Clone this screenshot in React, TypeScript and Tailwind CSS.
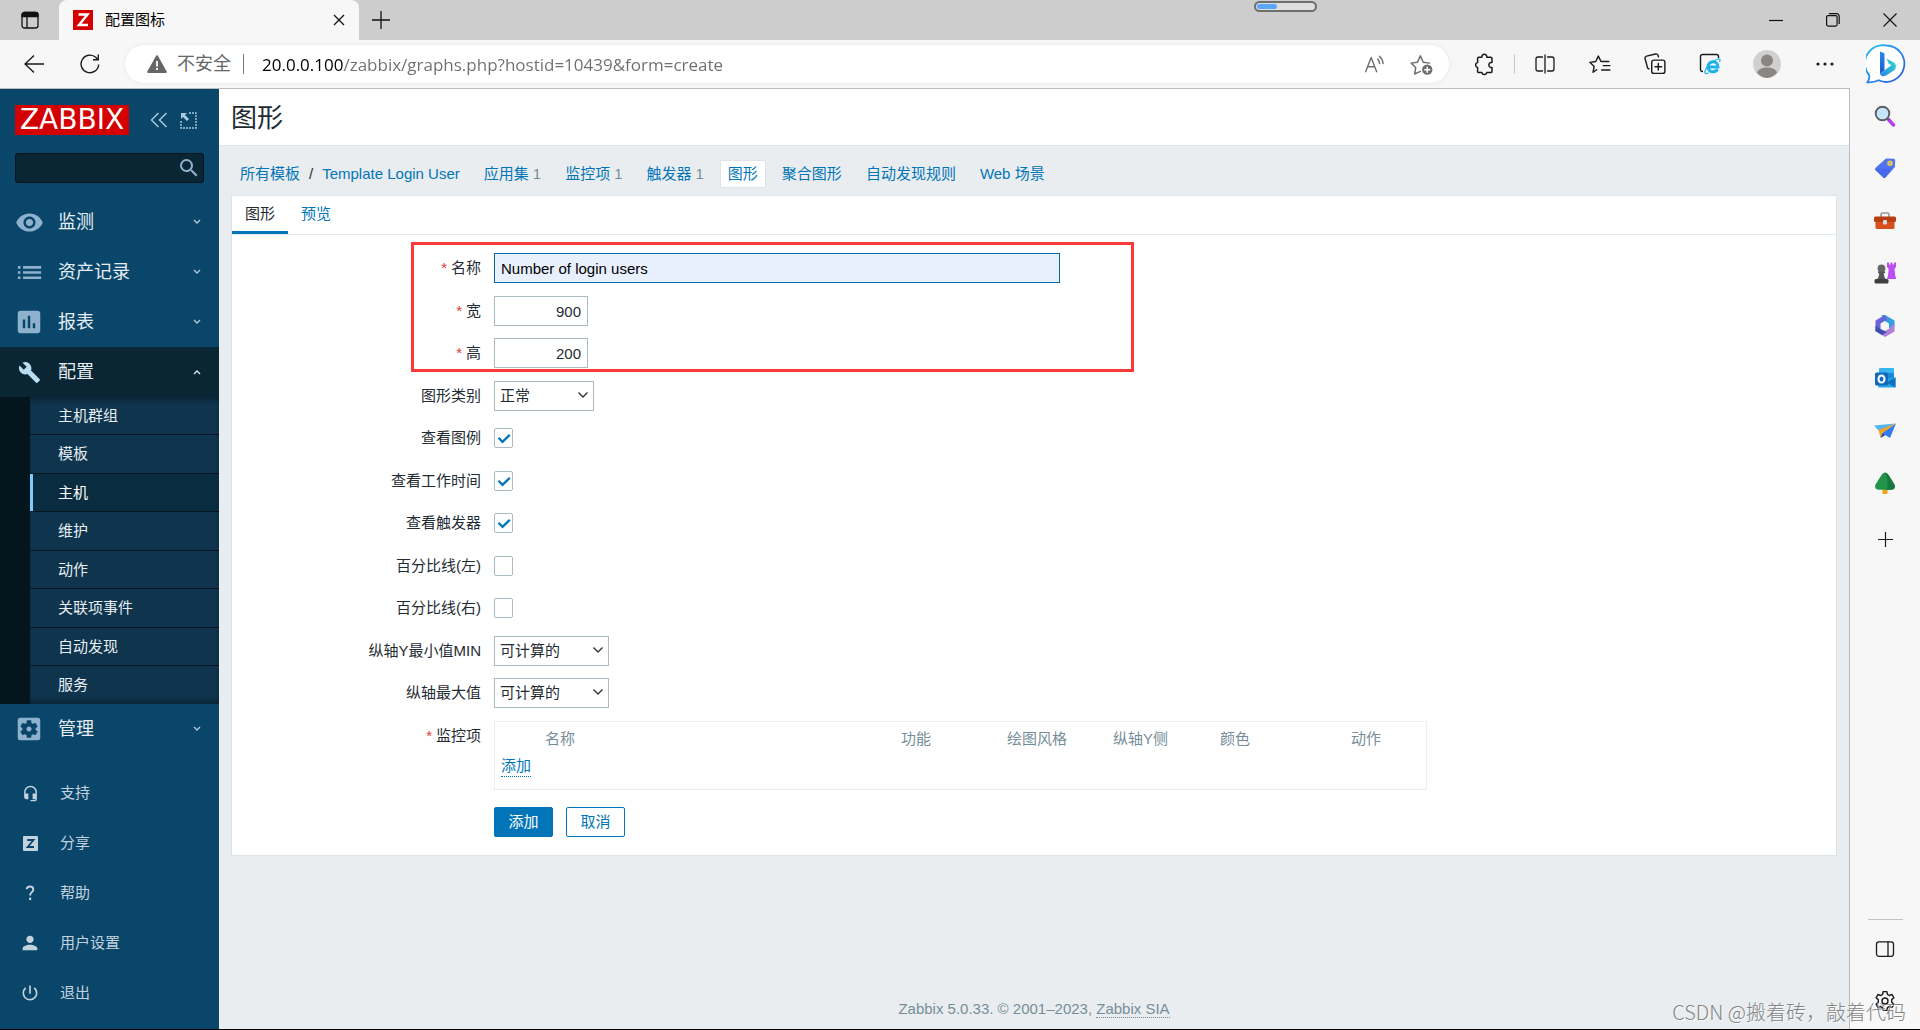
// src/App.tsx
import { useState } from "react";
import type { ReactNode } from "react";
import clsx from "clsx";
import {
  MdAssessment,
  MdBuild,
  MdHeadsetMic,
  MdList,
  MdPerson,
  MdPowerSettingsNew,
  MdSearch,
  MdSettingsApplications,
  MdVisibility,
} from "react-icons/md";

/* ---------- 图标 ---------- */

interface LineIconProps {
  children: ReactNode;
  className?: string;
}

const LineIcon = ({ children, className = "w-5 h-5" }: LineIconProps) => (
  <svg
    className={className}
    viewBox="0 0 20 20"
    fill="none"
    stroke="currentColor"
    strokeWidth={1.3}
    strokeLinecap="round"
    strokeLinejoin="round"
    aria-hidden="true"
  >
    {children}
  </svg>
);

const ChevronIcon = ({ up = false }: { up?: boolean }) => (
  <svg className="w-2 h-2" viewBox="0 0 8 8" fill="none" stroke="currentColor" strokeWidth={1.3}>
    <path d={up ? "M1 6l3-3 3 3" : "M1 2l3 3 3-3"} />
  </svg>
);

const ShareIcon = () => (
  <svg className="w-[15px] h-[15px]" viewBox="0 0 15 15">
    <rect width="15" height="15" rx="1" fill="currentColor" />
    <path d="M4.2 4h6.4L4.6 11h6.4" fill="none" stroke="#0a466a" strokeWidth="1.8" />
  </svg>
);

const HelpIcon = () => (
  <svg className="w-4 h-4" viewBox="0 0 16 16" fill="none" stroke="currentColor">
    <path d="M4.6 4.2C4.9 2.4 6.2 1.5 8 1.5c2 0 3.3 1.1 3.3 2.9 0 2.6-3.2 2.9-3.2 6" strokeWidth="1.9" />
    <path d="M8.1 12.6v2.4" strokeWidth="2.2" />
  </svg>
);

const BingIcon = () => (
  <svg className="w-10 h-10" viewBox="0 0 40 40">
    <defs>
      <linearGradient id="bingRing" x1="0" y1="0" x2="1" y2="1">
        <stop offset="0" stopColor="#1fc3f0" />
        <stop offset="0.5" stopColor="#2a8af0" />
        <stop offset="1" stopColor="#2456d6" />
      </linearGradient>
      <linearGradient id="bingStem" x1="0" y1="0" x2="0" y2="1">
        <stop offset="0" stopColor="#2a8bf2" />
        <stop offset="1" stopColor="#1f57d0" />
      </linearGradient>
      <linearGradient id="bingBowl" x1="0" y1="1" x2="1" y2="0">
        <stop offset="0" stopColor="#2383ee" />
        <stop offset="1" stopColor="#35e0c8" />
      </linearGradient>
    </defs>
    <path
      d="M20.500 1.500a18.200 18.200 0 1 1-7.800 34.800c-3 1.500-7 2.200-11.200 2 1.700-2.300 2.100-4.300 1.700-7.100A18.200 18.200 0 0 1 20.500 1.500z"
      fill="#fff"
      stroke="url(#bingRing)"
      strokeWidth="1.8"
    />
    <path d="M14 7.500l4.500 1.800v17L14 30z" fill="url(#bingStem)" />
    <path d="M20.500 14.500l2.300 5.300 2.700 1.400-7 5.100L14 30c1.200 2.400 3.800 2.900 6 1.600l7.500-4.800c3.700-2.600 3-7.300-.5-8.800z" fill="url(#bingBowl)" />
  </svg>
);

/* ---------- 浏览器外壳 ---------- */

const TitleBar = () => (
  <div className="flex h-10 items-end bg-[#cdcdcd] pr-0.5 text-black">
    <button aria-label="标签操作" className="flex h-10 w-[59px] items-center justify-center">
      <svg className="w-[18px] h-[18px]" viewBox="0 0 18 18" fill="none" stroke="#111" strokeWidth="1.3">
        <rect x="1" y="1.5" width="16" height="15.5" rx="2.5" />
        <path d="M1 4a2.500 2.500 0 0 1 2.500-2.500h11A2.500 2.500 0 0 1 17 4v1.500H1z" fill="#111" />
        <path d="M6 5.500V17" />
      </svg>
    </button>
    <div className="flex h-10 w-[300px] items-center rounded-t-lg bg-[#f7f7f7] pl-[14px] pr-2.5">
      <svg className="w-5 h-5" viewBox="0 0 20 20">
        <rect width="20" height="20" fill="#d40000" />
        <path d="M5.500 4.500h9L6 15h9" fill="none" stroke="#fff" strokeWidth="2.4" />
      </svg>
      <span className="ml-3 flex-1 text-[15px] leading-5">配置图标</span>
      <button aria-label="关闭标签页" className="p-1">
        <svg className="w-3 h-3" viewBox="0 0 12 12" stroke="#111" strokeWidth="1.3">
          <path d="M1 1l10 10M11 1L1 11" />
        </svg>
      </button>
    </div>
    <button aria-label="新建标签页" className="flex h-10 w-11 items-center justify-center">
      <svg className="w-[18px] h-[18px]" viewBox="0 0 18 18" stroke="#111" strokeWidth="1.3">
        <path d="M9 0v18M0 9h18" />
      </svg>
    </button>
    <div className="flex flex-1 self-start pl-[851px] pt-px">
      <div className="h-[11px] w-[63px] rounded-full border-2 border-[#6f6f6f] bg-[#dedede] p-px">
        <div className="h-full w-5 rounded-full bg-[#5ba5fb]" />
      </div>
    </div>
    <div className="flex h-10 items-center">
      <button aria-label="最小化" className="flex h-10 w-[57px] items-center justify-center">
        <svg className="w-[14px] h-[14px]" viewBox="0 0 14 14" stroke="#111" strokeWidth="1.2">
          <path d="M0 7.500h14" />
        </svg>
      </button>
      <button aria-label="还原" className="flex h-10 w-[57px] items-center justify-center">
        <svg className="w-[14px] h-[14px]" viewBox="0 0 14 14" fill="none" stroke="#111" strokeWidth="1.2">
          <rect x="0.6" y="2.6" width="10.5" height="10.5" rx="1.5" />
          <path d="M3 0.700h7.500a2.700 2.700 0 0 1 2.700 2.700V11" />
        </svg>
      </button>
      <button aria-label="关闭" className="flex h-10 w-[57px] items-center justify-center">
        <svg className="w-[14px] h-[14px]" viewBox="0 0 14 14" stroke="#111" strokeWidth="1.1">
          <path d="M0.500 0.500l13 13M13.500 0.500l-13 13" />
        </svg>
      </button>
    </div>
  </div>
);

const ToolButton = ({ label, children }: { label: string; children: ReactNode }) => (
  <button aria-label={label} className="flex h-9 w-[55px] items-center justify-center">
    {children}
  </button>
);

const AddressBar = () => (
  <div className="flex h-12 items-center bg-[#f7f7f7] text-[#1b1b1b]">
    <button aria-label="后退" className="flex h-9 w-[68px] items-center justify-center">
      <svg className="w-5 h-5" viewBox="0 0 20 20" fill="none" stroke="currentColor" strokeWidth="1.4">
        <path d="M20 10H1M10 1.500L1 10l9 8.500" />
      </svg>
    </button>
    <button aria-label="刷新" className="flex h-9 w-11 items-center justify-center">
      <svg className="w-5 h-5" viewBox="0 0 20 20" fill="none" stroke="currentColor" strokeWidth="1.4">
        <path d="M18.700 10.500A8.800 8.800 0 1 1 16 3.600L18 5.600" />
        <path d="M18.300 0.500v5.300H13" />
      </svg>
    </button>
    <div className="ml-[13px] flex h-[38px] flex-1 items-center rounded-full bg-white pl-[22px] pr-4 shadow-[0_0_4px_rgba(0,0,0,0.08)]">
      <svg className="w-5 h-[18px]" viewBox="0 0 20 18">
        <path d="M10 1.200L18.800 17H1.200z" fill="#666" stroke="#666" strokeWidth="2" strokeLinejoin="round" />
        <path d="M10 6v5.500M10 13v2" stroke="#fff" strokeWidth="1.8" />
      </svg>
      <span className="ml-2.5 text-lg leading-6 text-[#666]">不安全</span>
      <span className="mx-3 h-5 w-px bg-[#777]" />
      {/* 主机名为黑色，路径为灰色 */}
      <input
        aria-label="地址"
        type="text"
        defaultValue="20.0.0.100/zabbix/graphs.php?hostid=10439&form=create"
        className="ml-1.5 h-7 min-w-0 flex-1 bg-[linear-gradient(90deg,#000_82px,#6e6e6e_82px)] bg-clip-text font-['Open_Sans','Noto_Sans_CJK_SC',sans-serif] text-[17px] text-transparent outline-none"
      />
      <button aria-label="大声朗读" className="mr-6 text-[#6e6e6e]">
        <LineIcon className="w-[22px] h-[22px]">
          <path d="M1.500 17L6.500 4l5 13M3.200 12.500h6.600" />
          <path d="M12.500 5.500q1.600 1.800 1.600 4M14 3q3 2.500 3.300 6.500" />
        </LineIcon>
      </button>
      <button aria-label="添加到收藏夹" className="text-[#6e6e6e]">
        <LineIcon className="w-[23px] h-[23px]">
          <path d="M9 16l-5 2.300 1-5.700-4-3.800 5.500-.8L9 2.500 11.500 8l5.500.800" />
          <circle cx="15" cy="14.5" r="4.5" fill="#6e6e6e" stroke="none" />
          <path d="M15 12.300v4.400M12.800 14.500h4.400" stroke="#fff" />
        </LineIcon>
      </button>
    </div>
    <div className="ml-2 flex items-center">
      <ToolButton label="扩展">
        <LineIcon className="w-[23px] h-[23px]">
          <path d="M5 3.800h2.700a2.200 2.200 0 1 1 4.300 0h3.500a1 1 0 0 1 1 1v3.500h-1a2.200 2.200 0 0 0 0 4.300h1v3.400a1 1 0 0 1-1 1H12a2.200 2.200 0 0 1-4.300 0H5a1 1 0 0 1-1-1v-3.400a2.200 2.200 0 0 1 0-4.300V4.800a1 1 0 0 1 1-1z" />
        </LineIcon>
      </ToolButton>
      <span className="mx-0.5 h-5 w-px bg-[#c8c8c8]" />
      <ToolButton label="分屏">
        <LineIcon>
          <path d="M7.500 3H3a2 2 0 0 0-2 2v10a2 2 0 0 0 2 2h4.500M12.500 3H17a2 2 0 0 1 2 2v10a2 2 0 0 1-2 2h-4.500M10 1v18" />
        </LineIcon>
      </ToolButton>
      <ToolButton label="收藏夹">
        <LineIcon className="w-[22px] h-[22px]">
          <path d="M7 15.200L3.700 17.500l1-5.300L.8 8.500l5.300-.8L8.500 2.800l2.400 4.900H18M13 11.500h6M11.500 15.500H19" />
        </LineIcon>
      </ToolButton>
      <ToolButton label="集锦">
        <LineIcon className="w-[22px] h-[22px]">
          <rect x="7" y="6.5" width="12" height="12" rx="2" />
          <path d="M13 9.500v6M10 12.500h6M4.500 14.500l-1.200-.8L1 5.200a2 2 0 0 1 1.400-2.400l8-1.900a2 2 0 0 1 2.400 1.300l.4 1.300" />
        </LineIcon>
      </ToolButton>
      <ToolButton label="Internet Explorer 模式">
        <svg className="w-[22px] h-[22px]" viewBox="0 0 22 22" fill="none">
          <path d="M4 18.500H3.500a2 2 0 0 1-2-2v-13a2 2 0 0 1 2-2h14a2 2 0 0 1 2 2V5" stroke="#1b1b1b" strokeWidth="1.4" />
          <path d="M18.500 16.200c-1 1.800-2.500 2.600-4.500 2.600-3 0-5-2.100-5-5s2-5 5-5 5 2.200 5 5.200H9.500" stroke="#1fb1ec" strokeWidth="3" />
          <path d="M20.500 9c1.200-2.500.5-3.800-2-2.800C13 8 7 14 6 18c-.7 2.500.8 3.300 3.500 1.800" stroke="#1fb1ec" strokeWidth="1.2" />
        </svg>
      </ToolButton>
      <button aria-label="个人资料" className="mx-4 my-1">
        <svg className="w-7 h-7" viewBox="0 0 28 28">
          <circle cx="14" cy="14" r="14" fill="#d2d0ce" />
          <circle cx="14" cy="10.5" r="6" fill="#8a8683" />
          <path d="M4 22.500c1.500-3.500 5-5 10-5s8.500 1.500 10 5A14 14 0 0 1 14 28 14 14 0 0 1 4 22.500z" fill="#8a8683" />
        </svg>
      </button>
      <ToolButton label="设置及其他">
        <svg className="w-[18px] h-1" viewBox="0 0 18 4" fill="#1b1b1b">
          <circle cx="2" cy="2" r="1.6" />
          <circle cx="9" cy="2" r="1.6" />
          <circle cx="16" cy="2" r="1.6" />
        </svg>
      </ToolButton>
      <button aria-label="必应" className="mx-[14px]">
        <BingIcon />
      </button>
    </div>
  </div>
);

const railIcons: { label: string; icon: ReactNode }[] = [
  {
    label: "搜索",
    icon: (
      <>
        <path d="M14.500 14.500l5 5.500" stroke="#b93cf0" strokeWidth="3.4" strokeLinecap="round" />
        <path d="M12.500 12.500l2 2" stroke="#5a5a5a" strokeWidth="2" />
        <circle cx="8.5" cy="8.5" r="6.8" fill="#c6e5fb" stroke="#5c5f62" strokeWidth="1.9" />
      </>
    ),
  },
  {
    label: "购物",
    icon: (
      <>
        <path d="M12 1.500l7.500.2q1.700 0 1.700 1.700l-.3 6.600-9.300 10.500q-1.200 1-2.400 0L1.600 13.200q-1-1.200 0-2.400z" fill="#4f73f3" />
        <path d="M1.600 13.200q-.6-.8-.4-1.600L17 12l-5.600 8.500q-1 .8-2.200 0z" fill="#4460e8" opacity=".6" />
        <circle cx="16" cy="6.2" r="2" fill="#8fb0ff" stroke="#f4c52b" strokeWidth="1.6" />
      </>
    ),
  },
  {
    label: "工具",
    icon: (
      <>
        <path d="M7 7V4.500q0-1.500 1.500-1.500h5Q15 3 15 4.500V7" fill="none" stroke="#9a9a9a" strokeWidth="1.7" />
        <rect x="1.5" y="10" width="19" height="9" rx="1.5" fill="#d8501c" />
        <rect x="0" y="6.5" width="22" height="5.5" rx="1.5" fill="#b93d12" />
        <rect x="9" y="10" width="4" height="4.5" rx="1" fill="#d7dce0" />
      </>
    ),
  },
  {
    label: "游戏",
    icon: (
      <>
        <path d="M13 .5h2v2h1.500v-2h2v2H20v-2h2V5l-1.500 2 .7 6.500 1 3.500H13l1-3.500.7-6.500L13 5z" fill="#bd4df5" />
        <circle cx="7.5" cy="6.5" r="3.9" fill="#666" />
        <path d="M4 9.500h7v1.700H9.700q.3 4 2.300 6.300H3q2-2.300 2.300-6.300H4z" fill="#555" />
        <rect x="0.5" y="17" width="14" height="4.5" rx="1.5" fill="#3f3f3f" />
      </>
    ),
  },
  {
    label: "Microsoft 365",
    icon: (
      <>
        <path d="M11 0l9.500 5.500v6L15 14V8.500L11 6 7.500 0z" fill="#2f9fe0" />
        <path d="M11 0L1.500 5.500v10.800L6.500 14V8.500L13 4.500z" fill="#6a62d8" />
        <path d="M20.500 8v8.500L11 22l-6-3.500 6-2.500 4-2.200z" fill="#b07fd9" />
        <path d="M1.500 11v5.300L8 20l5-3-6.500-3z" fill="#3c4fae" />
        <circle cx="11" cy="11" r="3.6" fill="#f7f7f7" />
      </>
    ),
  },
  {
    label: "Outlook",
    icon: (
      <>
        <rect x="5" y="1" width="15" height="10" rx="1" fill="#36b5f0" />
        <path d="M5 6h15v6H5z" fill="#1a86d8" />
        <path d="M4 13l17.500-2.500v10H5.500q-1.500 0-1.500-1.500z" fill="#28a5ea" />
        <path d="M12 15.500l9.500-5v10z" fill="#1372bd" />
        <rect x="1" y="5.5" width="13" height="13" rx="1.5" fill="#0f6cbd" />
        <ellipse cx="7.5" cy="12" rx="3" ry="3.5" fill="none" stroke="#fff" strokeWidth="2" />
      </>
    ),
  },
  {
    label: "投递",
    icon: (
      <>
        <path d="M0 5.500L22 3.500 6 12z" fill="#50b5f2" />
        <path d="M22 3.500L16 18l-8-5z" fill="#2f7df0" />
        <path d="M4.500 10L22 3.500 8.500 13 6.500 18z" fill="#f5a51d" />
        <path d="M6.500 18l2-5 3 2z" fill="#1b4fb0" />
      </>
    ),
  },
  {
    label: "电子树",
    icon: (
      <>
        <rect x="8.5" y="15" width="5" height="7" rx="1" fill="#f0a11c" />
        <path d="M11 .5q2 0 3.500 2.500l6 9.500q1.500 5-3 5.200h-13q-4.500-.2-3-5.200l6-9.500Q9 .5 11 .5z" fill="#23924a" />
        <path d="M11 .5q2 0 3.500 2.500l6 9.500q1.500 5-3 5.200H12q4-6-1-17.200z" fill="#177a3d" />
      </>
    ),
  },
];

const BrowserRail = () => (
  <aside className="flex w-[70px] shrink-0 flex-col items-center bg-[#f7f7f7] pb-0.5 pt-px text-[#1b1b1b]">
    {railIcons.map(({ label, icon }) => (
      <button key={label} aria-label={label} className="flex h-[53px] w-full items-center justify-center even:h-[52px]">
        <svg className="w-[22px] h-[22px]" viewBox="0 0 22 22">{icon}</svg>
      </button>
    ))}
    <button aria-label="自定义" className="flex h-[60px] w-full items-center justify-center">
      <svg className="w-[15px] h-[15px]" viewBox="0 0 15 15" stroke="currentColor" strokeWidth="1.2">
        <path d="M7.500 0v15M0 7.500h15" />
      </svg>
    </button>
    <div className="mt-auto h-px w-[35px] bg-[#c2c2c2]" />
    <button aria-label="隐藏边栏" className="mt-[3px] flex h-[52px] w-full items-center justify-center">
      <LineIcon>
        <rect x="1.5" y="2.8" width="17" height="14.5" rx="2.5" />
        <path d="M13 2.800v14.500" />
      </LineIcon>
    </button>
    <button aria-label="设置" className="flex h-[52px] w-full items-center justify-center">
      <LineIcon className="w-[22px] h-[22px]">
        <circle cx="10" cy="10" r="2.7" />
        <path d="M8.300 1.500h3.400l.5 2.500 1.700 1 2.500-.9 1.700 3-2 1.600v2.500l2 1.700-1.700 3-2.500-.9-1.700 1-.5 2.500H8.300l-.5-2.500-1.700-1-2.500.9-1.700-3 2-1.700V8.700l-2-1.600 1.700-3 2.500.9 1.700-1z" />
      </LineIcon>
    </button>
  </aside>
);

/* ---------- Zabbix 侧边菜单 ---------- */

interface MenuItem {
  label: string;
  icon: ReactNode;
  children?: string[];
}

const mainMenu: MenuItem[] = [
  { label: "监测", icon: <MdVisibility size={29} /> },
  { label: "资产记录", icon: <MdList size={31} /> },
  { label: "报表", icon: <MdAssessment size={30} /> },
  {
    label: "配置",
    icon: <MdBuild size={23} />,
    children: ["主机群组", "模板", "主机", "维护", "动作", "关联项事件", "自动发现", "服务"],
  },
  { label: "管理", icon: <MdSettingsApplications size={30} /> },
];

const userMenu: MenuItem[] = [
  { label: "支持", icon: <MdHeadsetMic size={17} /> },
  { label: "分享", icon: <ShareIcon /> },
  { label: "帮助", icon: <HelpIcon /> },
  { label: "用户设置", icon: <MdPerson size={22} /> },
  { label: "退出", icon: <MdPowerSettingsNew size={20} /> },
];

const Sidebar = () => (
  <aside className="w-[219px] shrink-0 bg-[#0a466a] text-white">
    <div className="flex h-[46px] items-end pl-[15px]">
      <a
        href="#"
        className="flex h-[30px] w-[114px] items-center justify-center bg-[#d40000] font-['DejaVu_Sans',sans-serif] text-[28px] leading-none"
      >
        ZABBIX
      </a>
      <div className="flex h-[30px] items-center gap-3 pl-[21px] text-[#a9c8dc]">
        <button aria-label="折叠菜单">
          <svg className="w-[18px] h-4" viewBox="0 0 18 16" fill="none" stroke="currentColor" strokeWidth="1.5">
            <path d="M8.500 1L1.500 8l7 7M16.500 1l-7 7 7 7" />
          </svg>
        </button>
        <button aria-label="隐藏菜单">
          <svg className="w-[17px] h-[17px]" viewBox="0 0 17 17" fill="none" stroke="currentColor" strokeWidth="1.4">
            <path d="M9 1h7v15H1V9" strokeDasharray="2 1" />
            <path d="M1 1h6L5 3l4 4-2 2-4-4-2 2z" fill="currentColor" stroke="none" />
          </svg>
        </button>
      </div>
    </div>

    <form
      onSubmit={(e) => e.preventDefault()}
      className="mx-[15px] mb-[14px] mt-[18px] flex h-[30px] items-center rounded-[3px] border border-[#04141d] bg-[#0a2635] pr-0.5"
    >
      <input aria-label="搜索" type="text" className="h-full min-w-0 flex-1 bg-transparent px-2 text-[15px] outline-none" />
      <button aria-label="搜索" className="text-[#8eb2cd]">
        <MdSearch size={24} />
      </button>
    </form>

    <nav>
      {mainMenu.map(({ label, icon, children }) => (
        <div key={label}>
          <a href="#" className={clsx("flex h-[50px] items-center text-lg text-[#e6eef3]", children && "bg-[#0a2635]")}>
            <span className={clsx("flex w-[58px] justify-center", children ? "text-[#b9dcf0]" : "text-[#8eb2cd]")}>
              {icon}
            </span>
            <span className="flex-1 leading-6">{label}</span>
            <span className={clsx("pr-[18px]", !children && "text-[#b5cad8]")}>
              <ChevronIcon up={!!children} />
            </span>
          </a>
          {children && (
            <ul className="border-l-[30px] border-[#04151e] bg-[#0f344d] text-[15px] leading-5 shadow-[inset_0_6px_6px_-4px_rgba(0,0,0,0.4),inset_0_-6px_6px_-4px_rgba(0,0,0,0.4)]">
              {children.map((child) => (
                <li
                  key={child}
                  className="h-[38px] border-b border-[#06151d] even:h-[39px] last:h-[38px]! last:border-b-0"
                >
                  <a
                    href="#"
                    className={clsx(
                      "flex h-full items-center border-l-[3px] pl-[25px]",
                      child === "主机" ? "border-[#7fcbff] bg-[#0a2c40]" : "border-transparent text-[#e6eef3]"
                    )}
                  >
                    {child}
                  </a>
                </li>
              ))}
            </ul>
          )}
        </div>
      ))}
    </nav>

    <nav className="mt-[14px]">
      {userMenu.map(({ label, icon }) => (
        <a key={label} href="#" className="flex h-[50px] items-center text-[15px] text-[#c3d3de]">
          <span className="flex w-[60px] justify-center">{icon}</span>
          <span className="leading-5">{label}</span>
        </a>
      ))}
    </nav>
  </aside>
);

/* ---------- 图形表单 ---------- */

interface FieldProps {
  label: string;
  htmlFor?: string;
  required?: boolean;
  children: ReactNode;
}

const FieldLabel = ({ label, htmlFor, required }: Omit<FieldProps, "children">) => (
  <label htmlFor={htmlFor} className="mr-[13px] w-[249px] shrink-0 pt-[5px] text-right leading-5">
    {required && <span className="mr-1 text-[#e33734]">*</span>}
    {label}
  </label>
);

const Field = ({ label, htmlFor, required, children }: FieldProps) => (
  <div className="flex h-[42px] items-start odd:h-[43px]">
    <FieldLabel label={label} htmlFor={htmlFor} required={required} />
    <div className="flex h-[30px] items-center">{children}</div>
  </div>
);

interface SelectFieldProps {
  id: string;
  options: string[];
  className: string;
}

const SelectField = ({ id, options, className }: SelectFieldProps) => (
  <div className={clsx("relative h-[30px]", className)}>
    <select id={id} className="h-full w-full appearance-none border border-[#acbbc2] bg-white pl-[5px] outline-none">
      {options.map((option) => (
        <option key={option}>{option}</option>
      ))}
    </select>
    <svg
      className="pointer-events-none absolute right-[5px] top-2 h-3 w-3"
      viewBox="0 0 12 12"
      fill="none"
      stroke="#333"
      strokeWidth="1.4"
    >
      <path d="M1.500 3.500L6 8l4.500-4.500" />
    </svg>
  </div>
);

const CheckField = ({ id, defaultChecked }: { id: string; defaultChecked?: boolean }) => (
  <div className="relative h-5 w-[19px]">
    <input
      id={id}
      type="checkbox"
      defaultChecked={defaultChecked}
      className="peer block h-full w-full appearance-none rounded-[2px] border border-[#acbbc2] bg-white"
    />
    <svg
      className="pointer-events-none absolute inset-0 hidden h-full w-full peer-checked:block"
      viewBox="0 0 19 20"
      fill="none"
      stroke="#0275b8"
      strokeWidth="2.3"
    >
      <path d="M4.500 9.800l4 4 7.300-7" />
    </svg>
  </div>
);

const breadcrumbs = [
  { label: "应用集", count: 1 },
  { label: "监控项", count: 1 },
  { label: "触发器", count: 1 },
  { label: "图形", active: true },
  { label: "聚合图形" },
  { label: "自动发现规则" },
  { label: "Web 场景" },
];

const GraphForm = () => (
  <form onSubmit={(e) => e.preventDefault()} className="relative pb-[18px] pt-[18px]">
    <div>
      <Field label="名称" htmlFor="name" required>
        <input
          id="name"
          type="text"
          defaultValue="Number of login users"
          className="h-[30px] w-[566px] border border-[#0a6aa1] bg-[#e8f0fe] px-1.5 text-black outline-none"
        />
      </Field>
      <Field label="宽" htmlFor="width" required>
        <input id="width" type="text" defaultValue="900" className="h-[30px] w-[94px] border border-[#acbbc2] px-1.5 text-right outline-none" />
      </Field>
      <Field label="高" htmlFor="height" required>
        <input id="height" type="text" defaultValue="200" className="h-[30px] w-[94px] border border-[#acbbc2] px-1.5 text-right outline-none" />
      </Field>
      <Field label="图形类别" htmlFor="graphtype">
        <SelectField id="graphtype" options={["正常", "层积的", "饼图", "分解的"]} className="w-[100px]" />
      </Field>
      <Field label="查看图例" htmlFor="legend">
        <CheckField id="legend" defaultChecked />
      </Field>
      <Field label="查看工作时间" htmlFor="worktime">
        <CheckField id="worktime" defaultChecked />
      </Field>
      <Field label="查看触发器" htmlFor="triggers">
        <CheckField id="triggers" defaultChecked />
      </Field>
      <Field label="百分比线(左)" htmlFor="percentLeft">
        <CheckField id="percentLeft" />
      </Field>
      <Field label="百分比线(右)" htmlFor="percentRight">
        <CheckField id="percentRight" />
      </Field>
      <Field label="纵轴Y最小值MIN" htmlFor="ymin">
        <SelectField id="ymin" options={["可计算的", "固定的", "监控项"]} className="w-[115px]" />
      </Field>
      <Field label="纵轴最大值" htmlFor="ymax">
        <SelectField id="ymax" options={["可计算的", "固定的", "监控项"]} className="w-[115px]" />
      </Field>
    </div>

    {/* 监控项表格 */}
    <div className="flex items-start">
      <FieldLabel label="监控项" htmlFor="addItem" required />
      <div className="w-[933px] border border-[#ebeef0] pb-[10px] pt-[3px]">
        <table className="w-full table-fixed text-left leading-5">
          <thead className="text-[#768d99]">
            <tr className="h-7">
              <th className="w-[50px]" />
              <th className="w-[356px] font-normal">名称</th>
              <th className="w-[106px] font-normal">功能</th>
              <th className="w-[106px] font-normal">绘图风格</th>
              <th className="w-[107px] font-normal">纵轴Y侧</th>
              <th className="w-[131px] font-normal">颜色</th>
              <th className="font-normal">动作</th>
            </tr>
          </thead>
          <tbody>
            <tr className="h-[26px]">
              <td colSpan={7} className="pl-1.5">
                <button id="addItem" type="button" className="border-b border-dotted border-[#0275b8] text-[#0275b8]">
                  添加
                </button>
              </td>
            </tr>
          </tbody>
        </table>
      </div>
    </div>

    <div className="mt-[17px] flex gap-[13px] pl-[262px]">
      <button type="submit" className="h-[30px] w-[59px] rounded-[2px] border border-[#0275b8] bg-[#0275b8] text-white">
        添加
      </button>
      <button type="button" className="h-[30px] w-[59px] rounded-[2px] border border-[#0275b8] bg-white text-[#0275b8]">
        取消
      </button>
    </div>

    {/* 必填区域标注框 */}
    <div className="pointer-events-none absolute left-[179px] top-[7px] h-[130px] w-[723px] border-[3px] border-[#f93a37]" />
  </form>
);

const GraphPage = () => {
  const [tab, setTab] = useState("图形");

  return (
    <main className="flex min-w-0 flex-1 flex-col bg-[#e9edf0] text-[15px] text-[#1f2c33]">
      <header className="flex h-[57px] items-center border-b border-[#dfe4e7] bg-white px-3 pt-0.5">
        <h1 className="text-[26px] leading-8">图形</h1>
      </header>

      <nav className="flex items-center gap-2 px-3 pb-[7px] pt-[14px] leading-5 text-[#0275b8]">
        <div className="flex gap-[9px] pl-[9px] pr-2">
          <a href="#">所有模板</a>
          <span className="text-[#1f2c33]">/</span>
          <a href="#">Template Login User</a>
        </div>
        {breadcrumbs.map(({ label, count, active }) => (
          <span
            key={label}
            className={clsx("border px-[7px] py-[3px]", active ? "border-[#dfe4e7] bg-white" : "border-transparent")}
          >
            <a href="#">{label}</a>
            {count && <sup className="top-0 ml-1 text-[15px] text-[#768d99]">{count}</sup>}
          </span>
        ))}
      </nav>

      <section className="mx-3 border border-[#dfe4e7] bg-white">
        <div className="flex h-[39px] border-b border-[#e4e9ec]">
          {["图形", "预览"].map((name) => (
            <button
              key={name}
              type="button"
              onClick={() => setTab(name)}
              className={clsx(
                "border-b-[3px] px-[13px] leading-5",
                tab === name ? "border-[#0275b8]" : "border-transparent text-[#0275b8]"
              )}
            >
              {name}
            </button>
          ))}
        </div>
        <GraphForm />
      </section>

      <footer className="mt-auto pb-[10px] text-center leading-5 text-[#768d99]">
        Zabbix 5.0.33. © 2001–2023,{" "}
        <a href="#" className="border-b border-dotted border-[#768d99]">
          Zabbix SIA
        </a>
      </footer>
    </main>
  );
};

const App = () => (
  <div className="relative flex min-h-screen flex-col border-b border-black bg-[#f7f7f7] font-['Liberation_Sans','Noto_Sans_CJK_SC',sans-serif]">
    <TitleBar />
    <AddressBar />
    <div className="flex flex-1">
      <div className="flex min-w-0 flex-1 border-r border-t border-[#bcbcbc]">
        <Sidebar />
        <GraphPage />
      </div>
      <BrowserRail />
    </div>
    <div className="pointer-events-none absolute bottom-[3px] right-[14px] font-['Noto_Sans_CJK_SC',sans-serif] text-xl font-light leading-7 text-[#858585] [text-shadow:1px_1px_0_#ffffffb0]">
      CSDN @搬着砖，敲着代码
    </div>
  </div>
);

export default App;
